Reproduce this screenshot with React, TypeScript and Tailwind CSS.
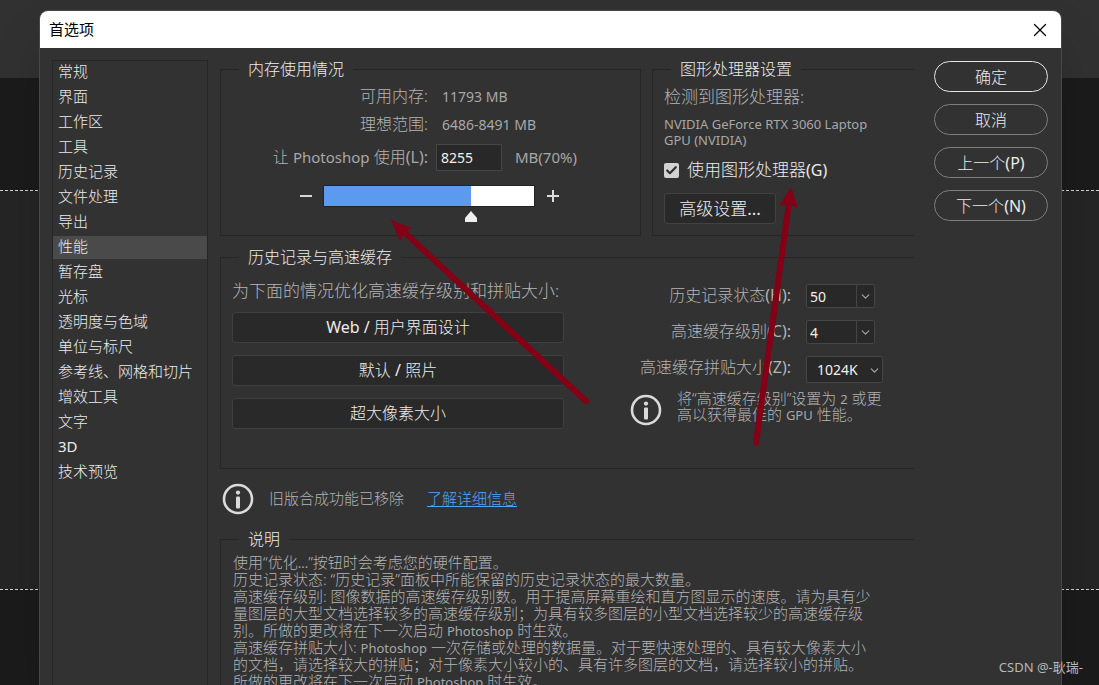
import { useState } from 'react';
import type { ReactNode } from 'react';
import { Check, ChevronDown, X } from 'lucide-react';

const categories = [
  '常规',
  '界面',
  '工作区',
  '工具',
  '历史记录',
  '文件处理',
  '导出',
  '性能',
  '暂存盘',
  '光标',
  '透明度与色域',
  '单位与标尺',
  '参考线、网格和切片',
  '增效工具',
  '文字',
  '3D',
  '技术预览',
];

const presets = ['Web / 用户界面设计', '默认 / 照片', '超大像素大小'];

const actions = ['确定', '取消', '上一个(P)', '下一个(N)'];

function Latin({ children }: { children: ReactNode }) {
  return <span className="text-[13px] font-normal leading-none text-[#a8a8a8]">{children}</span>;
}

// Latin runs are set in the regular weight, Chinese stays light
function Mixed({ text }: { text: string }) {
  return (
    <span>
      {text.split(/([!-~]+)/).map((part, i) =>
        i % 2 ? (
          <span key={i} className="font-normal">
            {part}
          </span>
        ) : (
          part
        )
      )}
    </span>
  );
}

function InfoIcon() {
  return (
    <svg width="32" height="32" viewBox="0 0 32 32" className="shrink-0">
      <circle cx="16" cy="16" r="14" fill="none" stroke="#dadada" strokeWidth="2.6" />
      <circle cx="16" cy="9.6" r="2.1" fill="#dadada" />
      <rect x="14" y="13.5" width="4" height="12" rx="1" fill="#dadada" />
    </svg>
  );
}

function Group({ title, className, children }: { title: string; className: string; children: ReactNode }) {
  return (
    <fieldset className={`min-w-0 border-[#262626] ${className}`}>
      <legend className="ml-[18px] px-[9px] text-[16px] leading-[24px] text-[#ececec]">{title}</legend>
      {children}
    </fieldset>
  );
}

function ComboBox({ id, initial }: { id: string; initial: string }) {
  const [value, setValue] = useState(initial);
  return (
    <div className="flex h-6 w-[69px] rounded-[2px] border border-[#454545] bg-[#282828]">
      <input
        id={id}
        value={value}
        onChange={(e) => setValue(e.target.value)}
        className="w-0 flex-1 pl-[3px] text-[14px] font-normal text-[#f0f0f0] outline-none"
      />
      <button aria-label="展开" className="flex w-[18px] items-center justify-center border-l border-[#454545]">
        <ChevronDown size={13} strokeWidth={2} className="text-[#a8a8a8]" />
      </button>
    </div>
  );
}

function MemoryGroup() {
  const [memory, setMemory] = useState(8255);
  const percent = Math.round((memory / 11793) * 100);

  return (
    <Group title="内存使用情况" className="border pb-[19px]">
      <div className="pt-px text-[16px] text-[#b4b4b4]">
        <div className="flex h-7 items-center gap-[14px]">
          <span className="w-[207px] text-right">可用内存:</span>
          <span className="text-[14px] font-normal text-[#a8a8a8]">11793 MB</span>
        </div>
        <div className="flex h-7 items-center gap-[14px]">
          <span className="w-[207px] text-right">理想范围:</span>
          <span className="text-[14px] font-normal text-[#a8a8a8]">6486-8491 MB</span>
        </div>
        <div className="flex h-[38px] items-center">
          <label htmlFor="memory" className="w-[207px] text-right">
            让 <span className="text-[15px] font-normal text-[#a8a8a8]">Photoshop</span> 使用
            <span className="font-normal text-[#a8a8a8]">(L):</span>
          </label>
          <input
            id="memory"
            value={memory}
            onChange={(e) => setMemory(Number(e.target.value) || 0)}
            className="ml-2 h-[27px] w-[66px] border border-[#464646] bg-[#282828] pl-1 text-[14px] font-normal text-[#f0f0f0] outline-none"
          />
          <span className="ml-[13px] text-[15px] font-normal text-[#a8a8a8]">MB({percent}%)</span>
        </div>
        <div className="flex h-10 items-center pl-[79px]">
          <button aria-label="减少" onClick={() => setMemory(memory - 100)} className="flex h-3 w-3 items-center">
            <span className="h-[2px] w-3 bg-[#d6d6d6]" />
          </button>
          <div className="relative ml-[11px] h-[22px] w-[212px] border border-[#222] bg-white">
            <div className="h-full bg-[#5c9af0]" style={{ width: `${percent}%` }} />
            <svg
              width="12"
              height="11"
              viewBox="0 0 12 11"
              className="absolute top-[25px] -translate-x-1/2"
              style={{ left: `${percent}%` }}
            >
              <path d="M6 0 L12 7 V11 H0 V7 Z" fill="#f0f0f0" />
            </svg>
            <input
              type="range"
              aria-label="内存使用"
              min={0}
              max={11793}
              value={memory}
              onChange={(e) => setMemory(Number(e.target.value))}
              className="absolute inset-0 w-full opacity-0"
            />
          </div>
          <button aria-label="增加" onClick={() => setMemory(memory + 100)} className="ml-3 h-3 w-3">
            <svg width="12" height="12" viewBox="0 0 12 12">
              <path d="M6 0V12M0 6H12" stroke="#dcdcdc" strokeWidth="2" />
            </svg>
          </button>
        </div>
      </div>
    </Group>
  );
}

function GpuGroup() {
  const [enabled, setEnabled] = useState(true);

  return (
    <Group title="图形处理器设置" className="border border-r-0">
      <div className="pl-[11px] pt-[2px] text-[#b4b4b4]">
        <p className="h-7 text-[17px] leading-[28px]">检测到图形处理器:</p>
        <p className="mt-[5px] text-[13px] font-normal leading-[16px] text-[#a8a8a8]">
          NVIDIA GeForce RTX 3060 Laptop
          <br />
          GPU (NVIDIA)
        </p>
        <label className="mt-[10px] flex h-6 items-center gap-2 text-[17px] text-[#ececec]">
          <span className="relative h-[15px] w-[15px]">
            <input
              type="checkbox"
              checked={enabled}
              onChange={(e) => setEnabled(e.target.checked)}
              className="block h-[15px] w-[15px] appearance-none rounded-[2px] bg-[#d2d2d2]"
            />
            {enabled && (
              <Check size={13} strokeWidth={4} className="pointer-events-none absolute left-px top-px text-[#2e2e2e]" />
            )}
          </span>
          <span>
            使用图形处理器<span className="text-[16px] font-normal">(G)</span>
          </span>
        </label>
        <button className="mt-[11px] h-[31px] w-[112px] rounded-[3px] border border-[#424242] bg-[#292929] text-[17px] leading-none text-[#ececec]">
          <Mixed text="高级设置..." />
        </button>
      </div>
    </Group>
  );
}

function CacheGroup() {
  return (
    <Group title="历史记录与高速缓存" className="mt-[9px] border border-r-0">
      <div className="flex justify-between pb-[39px] pl-[11px]">
        <div className="mr-[66px] flex flex-1 flex-col gap-3">
          <p className="-mb-3 h-[43px] whitespace-nowrap text-[17px] leading-[44px] text-[#b4b4b4]">
            为下面的情况优化高速缓存级别和拼贴大小:
          </p>
          {presets.map((preset) => (
            <button
              key={preset}
              className="h-[31px] rounded-[3px] border border-[#404040] bg-[#292929] pb-px text-[16px] leading-none text-[#ececec]"
            >
              <Mixed text={preset} />
            </button>
          ))}
        </div>
        <div className="w-[284px] pt-[15px] text-[16px] text-[#b4b4b4]">
          <div className="flex h-9 items-start">
            <label htmlFor="states" className="w-[161px] text-right leading-[23px]">
              <Mixed text="历史记录状态(H):" />
            </label>
            <div className="ml-[15px]">
              <ComboBox id="states" initial="50" />
            </div>
          </div>
          <div className="flex h-9 items-start">
            <label htmlFor="levels" className="w-[161px] text-right leading-[23px]">
              <Mixed text="高速缓存级别(C):" />
            </label>
            <div className="ml-[15px]">
              <ComboBox id="levels" initial="4" />
            </div>
          </div>
          <div className="flex h-[34px] items-start">
            <label htmlFor="tile" className="w-[161px] text-right leading-[23px]">
              <Mixed text="高速缓存拼贴大小(Z):" />
            </label>
            <div className="relative ml-[15px]">
              <select
                id="tile"
                defaultValue="1024K"
                className="block h-[27px] w-[77px] appearance-none rounded-[2px] border border-[#454545] bg-[#282828] pl-[10px] text-[14px] font-normal text-[#f0f0f0]"
              >
                <option>128K</option>
                <option>132K</option>
                <option>1024K</option>
                <option>1028K</option>
              </select>
              <ChevronDown size={13} className="pointer-events-none absolute right-[2px] top-2 text-[#a8a8a8]" />
            </div>
          </div>
          <div className="flex items-start">
            <div className="pt-1">
              <InfoIcon />
            </div>
            <p className="ml-[15px] text-[15px] leading-[16px]">
              将“高速缓存级别”设置为 <Latin>2</Latin> 或更
              <br />
              高以获得最佳的 <Latin>GPU</Latin> 性能。
            </p>
          </div>
        </div>
      </div>
    </Group>
  );
}

function DescriptionGroup() {
  return (
    <Group title="说明" className="border border-r-0 border-b-0 pb-6">
      <p className="whitespace-nowrap pl-3 pt-[3px] text-[15px] leading-[17px] text-[#b4b4b4]">
        使用“优化<Latin>...</Latin>”按钮时会考虑您的硬件配置。
        <br />
        历史记录状态: “历史记录”面板中所能保留的历史记录状态的最大数量。
        <br />
        高速缓存级别: 图像数据的高速缓存级别数。用于提高屏幕重绘和直方图显示的速度。请为具有少
        <br />
        量图层的大型文档选择较多的高速缓存级别；为具有较多图层的小型文档选择较少的高速缓存级
        <br />
        别。所做的更改将在下一次启动 <Latin>Photoshop</Latin> 时生效。
        <br />
        高速缓存拼贴大小: <Latin>Photoshop</Latin> 一次存储或处理的数据量。对于要快速处理的、具有较大像素大小
        <br />
        的文档，请选择较大的拼贴；对于像素大小较小的、具有许多图层的文档，请选择较小的拼贴。
        <br />
        所做的更改将在下一次启动 <Latin>Photoshop</Latin> 时生效。
      </p>
    </Group>
  );
}

function Arrows() {
  return (
    <svg width="1099" height="685" className="pointer-events-none absolute left-0 top-0" fill="#840016" stroke="#840016">
      <path d="M586 401L403 231" strokeWidth="6" strokeLinecap="round" />
      <path d="M391 220L412 228L404 232L400 241Z" stroke="none" />
      <path d="M756 443L789 203" strokeWidth="6" strokeLinecap="round" />
      <path d="M791 187L798 208L788 204L779 206Z" stroke="none" />
    </svg>
  );
}

export default function App() {
  const [selected, setSelected] = useState('性能');

  return (
    <div className="relative flex h-screen flex-col overflow-hidden bg-[#1b1b1b] font-['Noto_Sans','Noto_Sans_CJK_SC',sans-serif] font-light">
      <div className="absolute inset-x-0 top-0 h-[78px] bg-[#313131]" />
      <div className="absolute inset-x-0 top-[190px] h-[400px] border-y border-dashed border-[#d0d0d0] bg-[#252525]" />

      <div
        role="dialog"
        aria-label="首选项"
        className="relative ml-[39px] mr-[37px] mt-[10px] flex min-h-0 flex-1 flex-col overflow-hidden rounded-t-[9px] border border-b-0 border-[#484848] bg-[#323232] shadow-2xl"
      >
        <header className="flex h-[37px] shrink-0 items-center justify-between bg-white pl-[9px] pr-[10px] text-black">
          <h1 className="text-[15px] font-normal">首选项</h1>
          <button aria-label="关闭">
            <X size={22} strokeWidth={1.3} />
          </button>
        </header>

        <div className="flex min-h-0 flex-1 pl-3 pr-[13px] pt-3">
          <nav className="w-[156px] shrink-0 border border-b-0 border-[#262626]">
            {categories.map((name) => (
              <button
                key={name}
                onClick={() => setSelected(name)}
                className={`mb-[2px] block h-[23px] w-full pb-[2px] pl-[5px] text-left text-[15px] leading-[21px] text-[#ececec] ${
                  name === selected ? 'bg-[#4a4a4a]' : ''
                }`}
              >
                <Mixed text={name} />
              </button>
            ))}
          </nav>

          <main className="-mt-[3px] ml-3 min-w-0 flex-1">
            <div className="grid grid-cols-[421fr_262fr] gap-[11px]">
              <MemoryGroup />
              <GpuGroup />
            </div>
            <CacheGroup />
            <div className="flex h-[58px] items-center pl-[2px] pt-px text-[15px]">
              <InfoIcon />
              <span className="ml-[15px] text-[#b4b4b4]">旧版合成功能已移除</span>
              <a href="#details" className="ml-[23px] text-[#4fa6ff] underline underline-offset-2">
                了解详细信息
              </a>
            </div>
            <DescriptionGroup />
          </main>

          <div className="ml-5 flex w-[114px] shrink-0 flex-col gap-3 pt-px">
            {actions.map((label, i) => (
              <button
                key={label}
                className={`h-[31px] rounded-full border text-[16px] leading-none text-[#ececec] ${
                  i === 0 ? 'border-[#e4e4e4]' : 'border-[#7e7e7e]'
                }`}
              >
                <Mixed text={label} />
              </button>
            ))}
          </div>
        </div>
      </div>

      <Arrows />
      <span className="absolute bottom-[9px] right-4 text-[13px] leading-[18px] font-normal text-[#b8b8b8]">CSDN @-耿瑞-</span>
    </div>
  );
}
